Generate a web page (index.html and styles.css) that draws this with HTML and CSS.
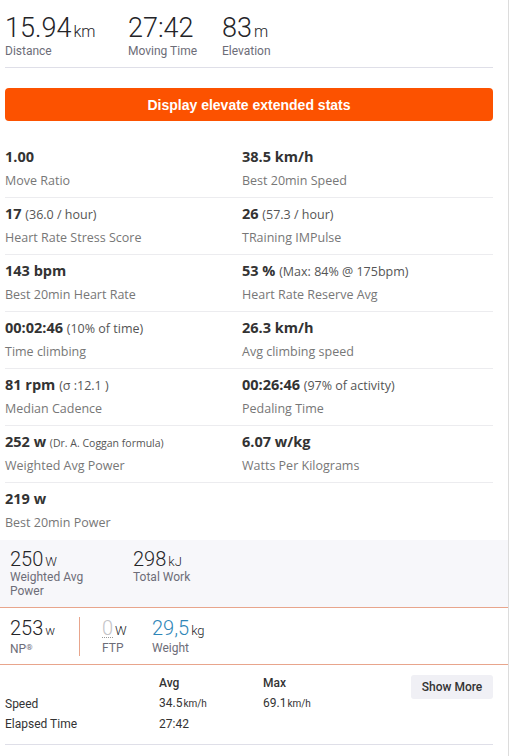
FILE: index.html
```html
<!DOCTYPE html>
<html lang="en">
<head>
  <meta charset="UTF-8">
  <title>Activity Stats</title>
  <link rel="stylesheet" href="styles.css">
</head>
<body>
  <div class="panel">

    <!-- Summary -->
    <ul class="summary">
      <li>
        <div class="big">15.94<abbr>km</abbr></div>
        <div class="caption">Distance</div>
      </li>
      <li>
        <div class="big">27:42</div>
        <div class="caption">Moving Time</div>
      </li>
      <li>
        <div class="big">83<abbr>m</abbr></div>
        <div class="caption">Elevation</div>
      </li>
    </ul>

    <button class="elevate-btn">Display elevate extended stats</button>

    <!-- Extended stats -->
    <div class="extended">
      <div class="stat-row">
        <div class="stat"><div class="value">1.00</div><div class="label">Move Ratio</div></div>
        <div class="stat"><div class="value">38.5 km/h</div><div class="label">Best 20min Speed</div></div>
      </div>
      <div class="stat-row">
        <div class="stat"><div class="value">17 <span class="extra">(36.0 / hour)</span></div><div class="label">Heart Rate Stress Score</div></div>
        <div class="stat"><div class="value">26 <span class="extra">(57.3 / hour)</span></div><div class="label">TRaining IMPulse</div></div>
      </div>
      <div class="stat-row">
        <div class="stat"><div class="value">143 bpm</div><div class="label">Best 20min Heart Rate</div></div>
        <div class="stat"><div class="value">53 % <span class="extra">(Max: 84% @ 175bpm)</span></div><div class="label">Heart Rate Reserve Avg</div></div>
      </div>
      <div class="stat-row">
        <div class="stat"><div class="value">00:02:46 <span class="extra">(10% of time)</span></div><div class="label">Time climbing</div></div>
        <div class="stat"><div class="value">26.3 km/h</div><div class="label">Avg climbing speed</div></div>
      </div>
      <div class="stat-row">
        <div class="stat"><div class="value">81 rpm <span class="extra">(σ :12.1 )</span></div><div class="label">Median Cadence</div></div>
        <div class="stat"><div class="value">00:26:46 <span class="extra">(97% of activity)</span></div><div class="label">Pedaling Time</div></div>
      </div>
      <div class="stat-row">
        <div class="stat"><div class="value">252 w <span class="extra small">(Dr. A. Coggan formula)</span></div><div class="label">Weighted Avg Power</div></div>
        <div class="stat"><div class="value">6.07 w/kg</div><div class="label">Watts Per Kilograms</div></div>
      </div>
      <div class="stat-row">
        <div class="stat"><div class="value">219 w</div><div class="label">Best 20min Power</div></div>
        <div class="stat"></div>
      </div>
    </div>

    <!-- Power -->
    <ul class="power">
      <li>
        <div class="mid">250<abbr>W</abbr></div>
        <div class="caption">Weighted Avg Power</div>
      </li>
      <li>
        <div class="mid">298<abbr>kJ</abbr></div>
        <div class="caption">Total Work</div>
      </li>
    </ul>

    <ul class="athlete">
      <li class="np">
        <div class="mid">253<abbr>w</abbr></div>
        <div class="caption">NP<span class="reg">®</span></div>
      </li>
      <li class="ftp">
        <div class="mid"><span class="empty">0</span><abbr>W</abbr></div>
        <div class="caption">FTP</div>
      </li>
      <li>
        <div class="mid"><span class="blue">29,5</span><abbr>kg</abbr></div>
        <div class="caption">Weight</div>
      </li>
    </ul>

    <!-- More stats -->
    <div class="more">
      <table>
        <tr>
          <th></th>
          <th>Avg</th>
          <th>Max</th>
        </tr>
        <tr>
          <td>Speed</td>
          <td>34.5<abbr>km/h</abbr></td>
          <td>69.1<abbr>km/h</abbr></td>
        </tr>
        <tr>
          <td>Elapsed Time</td>
          <td>27:42</td>
          <td></td>
        </tr>
      </table>
      <button class="show-more">Show More</button>
    </div>

  </div>
</body>
</html>
```

FILE: styles.css
```css
/* General Reset */
* {
  margin: 0;
  padding: 0;
  box-sizing: border-box;
}

body {
  font-family: 'Roboto', 'Liberation Sans', sans-serif;
  background: white;
  color: #242428;
}

ul {
  list-style: none;
}

abbr {
  text-decoration: none;
}

.panel {
  width: 509px;
  min-height: 756px;
  border-right: 1px solid #dcdcdc;
  padding-top: 12px;
}

/* Summary */
.summary {
  display: flex;
  margin: 0 15px 0 5px;
  padding-bottom: 9px;
  border-bottom: 1px solid #dfdfe8;
}

.summary li:nth-child(1) {
  width: 123px;
}

.summary li:nth-child(2) {
  width: 94px;
}

.big {
  height: 32px;
  font-size: 27px;
  font-weight: 300;
  line-height: 32px;
  color: #242428;
}

.big abbr {
  font-size: 16px;
  margin-left: 2px;
}

.caption {
  font-size: 12px;
  color: #6d6d78;
  line-height: 14px;
}

/* Orange button */
.elevate-btn {
  display: block;
  width: 488px;
  height: 33px;
  margin: 20px 0 0 5px;
  background-color: #fc5200;
  color: white;
  border: none;
  border-radius: 4px;
  font-family: 'Liberation Sans', sans-serif;
  font-weight: bold;
  font-size: 14px;
  cursor: pointer;
}

/* Extended stats */
.extended {
  margin: 20px 15px 0 5px;
}

.stat-row {
  display: grid;
  grid-template-columns: 237px 1fr;
  border-bottom: 1px solid #ececef;
  padding: 5px 0;
}

.stat-row:last-child {
  border-bottom: none;
}

.value {
  height: 22px;
  white-space: nowrap;
  font-family: 'Open Sans', sans-serif;
  font-size: 14.5px;
  font-weight: 700;
  line-height: 22px;
  color: #333;
}

.value .extra {
  font-size: 12.5px;
  font-weight: 400;
  color: #555;
}

.value .extra.small {
  font-size: 10.5px;
}

.label {
  height: 22px;
  margin-top: 2px;
  font-family: 'Open Sans', sans-serif;
  font-size: 12.5px;
  line-height: 22px;
  color: #777;
}

/* Power */
.power {
  display: flex;
  margin-top: 1px;
  padding: 8px 10px 9px;
  background-color: #f7f7fa;
  border-bottom: 1px solid #e8a58c;
}

.power li:first-child {
  width: 123px;
  padding-right: 20px;
}

.mid {
  height: 22px;
  font-size: 20px;
  font-weight: 300;
  line-height: 22px;
}

.mid abbr {
  font-size: 13px;
  margin-left: 2px;
}

.power .caption,
.athlete .caption {
  font-size: 12px;
  line-height: 14px;
}

.athlete {
  display: flex;
  padding: 9px 10px 8px;
  border-bottom: 1px solid #e8a58c;
}

.athlete .caption {
  margin-top: 2px;
}

.athlete .np {
  width: 70px;
  border-right: 1px solid #e8a58c;
  margin-right: 22px;
}

.athlete .ftp {
  width: 50px;
}

.reg {
  font-size: 8px;
  vertical-align: 3px;
}

.empty {
  color: #c4c4c8;
  border-bottom: 1px dotted #999;
  line-height: 18px;
  display: inline-block;
}

.blue {
  color: #2e86b8;
}

/* More stats */
.more {
  display: flex;
  align-items: flex-start;
  margin: 8px 15px 0 5px;
  padding-bottom: 10px;
  border-bottom: 1px solid #dfdfe8;
}

.more table {
  border-collapse: collapse;
  font-size: 12px;
  color: #333;
}

.more th {
  text-align: left;
  font-weight: 500;
  line-height: 20px;
}

.more td {
  line-height: 20px;
}

.more td:first-child {
  width: 154px;
}

.more td:nth-child(2) {
  width: 104px;
}

.more td abbr {
  font-size: 10px;
  margin-left: 1px;
}

.show-more {
  margin-left: auto;
  margin-top: 2px;
  width: 82px;
  height: 24px;
  background-color: #f0f0f5;
  border: none;
  border-radius: 3px;
  font-family: 'Roboto', sans-serif;
  font-size: 12px;
  font-weight: 500;
  color: #333;
}
```
